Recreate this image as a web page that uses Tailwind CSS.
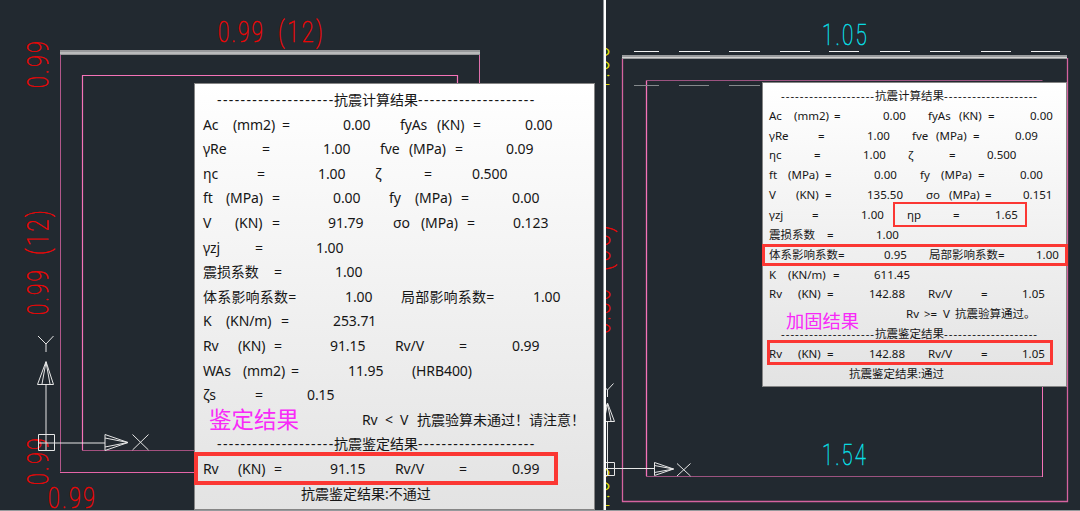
<!DOCTYPE html>
<html lang="zh-CN">
  <head>
    <meta charset="utf-8" />
    <title>抗震鉴定结果 / 加固结果</title>
    <script src="https://cdn.jsdelivr.net/npm/@tailwindcss/browser@4"></script>
  </head>
  <body class="bg-[#222930] overflow-hidden">
    <div class="flex w-[1080px] h-[511px] border-b border-[#96999c] font-['Noto_Sans','Noto_Sans_CJK_SC',sans-serif]">
      <!-- before reinforcement -->
      <div class="relative w-[603px] overflow-hidden">
        <svg class="block w-[603px] h-[510px]" viewBox="0 0 603 510" fill="none">
          <g stroke="#ff69b4">
            <path d="M60.5 54V471.5" stroke="#b2588a" />
            <path d="M60 472.5H194" stroke="#e565a8" />
            <path d="M82.5 450V75.5H457.5V84" stroke="#f573b8" stroke-width="1.2" />
            <path d="M82 450.5H194" stroke="#a3507f" />
            <path d="M479.5 54V84" stroke="#e070ac" />
          </g>
          <path d="M60 52.5H480" stroke="#98999b" stroke-width="5" />
          <path d="M60 53H480" stroke="#dcdcdc" />
          <g fill="#f00505" font-family="Roboto" font-weight="100" font-size="29" letter-spacing="3" stroke="#f00505" stroke-width="0.5">
            <text x="218" y="42" textLength="47" lengthAdjust="spacingAndGlyphs">0.99</text>
            <text x="278" y="42" textLength="47" lengthAdjust="spacingAndGlyphs">(12)</text>
            <text transform="translate(48 88) rotate(-90)" textLength="49" lengthAdjust="spacingAndGlyphs">0.99</text>
            <text transform="translate(48 315) rotate(-90)" textLength="47" lengthAdjust="spacingAndGlyphs">0.99</text>
            <text transform="translate(48 255) rotate(-90)" textLength="47" lengthAdjust="spacingAndGlyphs">(12)</text>
            <text transform="translate(48 485) rotate(-90)" textLength="49" lengthAdjust="spacingAndGlyphs">0.99</text>
            <text x="48" y="507.500" textLength="49" lengthAdjust="spacingAndGlyphs">0.99</text>
          </g>
          <!-- UCS icon -->
          <g stroke="#e6e6e6">
            <path d="M38.5 434.5H54.5V450.5H38.5ZM46 451V384M38 443H105" />
            <path d="M37.5 384.5H53.5L46 361.5ZM42 384L46 362L50 384" />
            <path d="M105 434.5V450.5L128 442.5ZM105 438L128 442.5L105 447" />
            <path d="M38 336L46 344L53.500 336M46 344V352M132.500 434.500L148.500 450M148.500 434.500L132.500 450" />
          </g>
        </svg>

        <div class="absolute left-[194px] top-[83px] w-[401px] h-[427px] border border-[#858585] bg-linear-to-b from-white to-[#e3e3e3] pl-2 pt-1 text-[14px] leading-[24.6px] tracking-[-0.1px] text-[#161616] whitespace-nowrap [&_span]:shrink-0">
          <div class="flex pl-3.5"><span class="w-[117px] tracking-[1.37px]">--------------------</span><span class="w-[84px] tracking-normal">抗震计算结果</span><span class="tracking-[1.37px]">--------------------</span></div>
          <div class="flex"><span class="w-[30px]">Ac</span><span class="w-[49px]">(mm2)</span><span class="w-[61px]">=</span><span class="w-[57px]">0.00</span><span class="w-[37px]">fyAs</span><span class="w-[36px]">(KN)</span><span class="w-[52px]">=</span><span>0.00</span></div>
          <div class="flex"><span class="w-[59px]">γRe</span><span class="w-[61px]">=</span><span class="w-[57px]">1.00</span><span class="w-[29px]">fve</span><span class="w-[46px]">(MPa)</span><span class="w-[51px]">=</span><span>0.09</span></div>
          <div class="flex"><span class="w-[54px]">ηc</span><span class="w-[61px]">=</span><span class="w-[57px]">1.00</span><span class="w-[49px]">ζ</span><span class="w-[48px]">=</span><span>0.500</span></div>
          <div class="flex"><span class="w-[23px]">ft</span><span class="w-[46px]">(MPa)</span><span class="w-[61px]">=</span><span class="w-[56px]">0.00</span><span class="w-[26px]">fy</span><span class="w-[46px]">(MPa)</span><span class="w-[51px]">=</span><span>0.00</span></div>
          <div class="flex"><span class="w-[32px]">V</span><span class="w-[37px]">(KN)</span><span class="w-[56px]">=</span><span class="w-[65px]">91.79</span><span class="w-[28px]">σo</span><span class="w-[46px]">(MPa)</span><span class="w-[46px]">=</span><span>0.123</span></div>
          <div class="flex"><span class="w-[52px]">γzj</span><span class="w-[61px]">=</span><span>1.00</span></div>
          <div class="flex"><span class="w-[71px]">震损系数</span><span class="w-[61px]">=</span><span>1.00</span></div>
          <div class="flex"><span class="w-[142px] tracking-[0.2px]">体系影响系数=</span><span class="w-[56px]">1.00</span><span class="w-[132px] tracking-[0.2px]">局部影响系数=</span><span>1.00</span></div>
          <div class="flex"><span class="w-[23px]">K</span><span class="w-[55px]">(KN/m)</span><span class="w-[52px]">=</span><span>253.71</span></div>
          <div class="flex"><span class="w-[35px]">Rv</span><span class="w-[36px]">(KN)</span><span class="w-[56px]">=</span><span class="w-[65px]">91.15</span><span class="w-[64px]">Rv/V</span><span class="w-[53px]">=</span><span>0.99</span></div>
          <div class="flex"><span class="w-[40px]">WAs</span><span class="w-[48px]">(mm2)</span><span class="w-[57px]">=</span><span class="w-[64px]">11.95</span><span>(HRB400)</span></div>
          <div class="flex"><span class="w-[52px]">ζs</span><span class="w-[52px]">=</span><span>0.15</span></div>
          <div class="flex pl-[159px]"><span class="w-[23px]">Rv</span><span class="w-[15px]">&lt;</span><span class="w-[17px]">V</span><span class="tracking-normal">抗震验算未通过！请注意！</span></div>
          <div class="flex pl-3.5"><span class="w-[117px] tracking-[1.37px]">--------------------</span><span class="w-[84px] tracking-normal">抗震鉴定结果</span><span class="tracking-[1.37px]">--------------------</span></div>
          <div class="flex"><span class="w-[35px]">Rv</span><span class="w-[36px]">(KN)</span><span class="w-[56px]">=</span><span class="w-[65px]">91.15</span><span class="w-[64px]">Rv/V</span><span class="w-[53px]">=</span><span>0.99</span></div>
          <div class="flex pl-[98px]"><span class="tracking-normal">抗震鉴定结果:不通过</span></div>
        </div>
        <div class="absolute left-[209px] top-[408px] text-[22.5px] leading-6 text-[#f82af8] whitespace-nowrap">鉴定结果</div>
        <div class="absolute left-[194px] top-[452px] w-[364px] h-[33px] border-4 border-[#fb3733]"></div>
      </div>

      <div class="w-[3px] bg-white border-l border-[#8c9094]"></div>

      <!-- after reinforcement -->
      <div class="relative w-[474px] overflow-hidden">
        <svg class="block w-[474px] h-[510px]" viewBox="606 0 474 510" fill="none">
          <path d="M622.5 58V501.5H1067.5V58" stroke="#d663a0" stroke-width="1.3" />
          <path d="M646.5 476V80.500" stroke="#f573b8" stroke-width="1.3" />
          <path d="M646 80.500H1042.500M646 476.500H1042.500" stroke="#9c5380" />
          <path d="M1042.500 386V477" stroke="#f573b8" />
          <path d="M634 51.500H659M679 51.500H710M729 51.500H760M780 51.500H810M829 51.500H859M880 51.500H910M930 51.500H960M981 51.500H1011M1031 51.500H1060" stroke="#f0f0f0" />
          <path d="M634 85.500H659M679 85.500H709M729 85.500H760" stroke="#85898c" />
          <path d="M622 57H1067" stroke="#999b9d" stroke-width="4" />
          <path d="M622 57.500H1067" stroke="#d2d2d2" />
          <g font-family="Roboto" font-weight="100" font-size="29" letter-spacing="3" stroke-width="0.5">
            <g fill="#08dfe4" stroke="#08dfe4">
              <text x="822" y="44.500" textLength="47" lengthAdjust="spacingAndGlyphs">1.05</text>
              <text x="822" y="465" textLength="46" lengthAdjust="spacingAndGlyphs">1.54</text>
            </g>
            <g fill="#e8e800" stroke="#e8e800">
              <text transform="translate(609 91) rotate(-90)" textLength="47" lengthAdjust="spacingAndGlyphs">1.00</text>
              <text transform="translate(609 512) rotate(-90)" textLength="47" lengthAdjust="spacingAndGlyphs">1.00</text>
            </g>
            <g fill="#f00505" stroke="#f00505">
              <text transform="translate(610 334) rotate(-90)" textLength="47" lengthAdjust="spacingAndGlyphs">0.86</text>
              <text transform="translate(610 271) rotate(-90)" textLength="48" lengthAdjust="spacingAndGlyphs">(05)</text>
            </g>
          </g>
          <!-- UCS icon, cut off by the viewport edge -->
          <g stroke="#e6e6e6">
            <path d="M600.500 462.500H614.500V475.500H600.500ZM607.500 476V422M600 468.500H654" />
            <path d="M600.500 421.500H614.500L607.500 403ZM604 421L607.500 404L611 421" />
            <path d="M654.500 462.500V475.500L673.500 469ZM654.500 465.500L673.500 469L654.500 472.500" />
            <path d="M601 383.500L607.500 390L613.500 383.500M607.500 390V397M677 463.500L690.500 476M690.500 463.500L677 476" />
          </g>
        </svg>

        <div class="absolute left-[156px] top-[82px] w-[305px] h-[305px] border border-[#858585] bg-linear-to-b from-white to-[#e3e3e3] pl-1.5 pt-[2.8px] text-[11.5px] leading-[19.86px] text-[#161616] whitespace-nowrap [&_span]:shrink-0">
          <div class="flex pl-3"><span class="w-[94px] tracking-[1px]">--------------------</span><span class="w-[69px]">抗震计算结果</span><span class="tracking-[1px]">--------------------</span></div>
          <div class="flex"><span class="w-[25px]">Ac</span><span class="w-[40px]">(mm2)</span><span class="w-[49px]">=</span><span class="w-[45px]">0.00</span><span class="w-[31px]">fyAs</span><span class="w-[29px]">(KN)</span><span class="w-[42px]">=</span><span>0.00</span></div>
          <div class="flex"><span class="w-[49px]">γRe</span><span class="w-[49px]">=</span><span class="w-[45px]">1.00</span><span class="w-[24px]">fve</span><span class="w-[37px]">(MPa)</span><span class="w-[42px]">=</span><span>0.09</span></div>
          <div class="flex"><span class="w-[45px]">ηc</span><span class="w-[49px]">=</span><span class="w-[45px]">1.00</span><span class="w-[41px]">ζ</span><span class="w-[38px]">=</span><span>0.500</span></div>
          <div class="flex"><span class="w-[19px]">ft</span><span class="w-[37px]">(MPa)</span><span class="w-[49px]">=</span><span class="w-[46px]">0.00</span><span class="w-[21px]">fy</span><span class="w-[37px]">(MPa)</span><span class="w-[42px]">=</span><span>0.00</span></div>
          <div class="flex"><span class="w-[27px]">V</span><span class="w-[29px]">(KN)</span><span class="w-[42px]">=</span><span class="w-[59px]">135.50</span><span class="w-[23px]">σo</span><span class="w-[36px]">(MPa)</span><span class="w-[38px]">=</span><span>0.151</span></div>
          <div class="flex"><span class="w-[43px]">γzj</span><span class="w-[49px]">=</span><span class="w-[46px]">1.00</span><span class="w-[46px]">ηp</span><span class="w-[42px]">=</span><span>1.65</span></div>
          <div class="flex"><span class="w-[58px]">震损系数</span><span class="w-[49px]">=</span><span>1.00</span></div>
          <div class="flex"><span class="w-[115px]">体系影响系数=</span><span class="w-[45px]">0.95</span><span class="w-[107px]">局部影响系数=</span><span>1.00</span></div>
          <div class="flex"><span class="w-[19px]">K</span><span class="w-[45px]">(KN/m)</span><span class="w-[41px]">=</span><span>611.45</span></div>
          <div class="flex"><span class="w-[29px]">Rv</span><span class="w-[29px]">(KN)</span><span class="w-[42px]">=</span><span class="w-[59px]">142.88</span><span class="w-[53px]">Rv/V</span><span class="w-[41px]">=</span><span>1.05</span></div>
          <div class="flex pl-[137px]"><span class="w-[18px]">Rv</span><span class="w-[19px]">&gt;=</span><span class="w-[12px]">V</span><span>抗震验算通过。</span></div>
          <div class="flex pl-3"><span class="w-[94px] tracking-[1px]">--------------------</span><span class="w-[69px]">抗震鉴定结果</span><span class="tracking-[1px]">--------------------</span></div>
          <div class="flex"><span class="w-[29px]">Rv</span><span class="w-[29px]">(KN)</span><span class="w-[42px]">=</span><span class="w-[59px]">142.88</span><span class="w-[53px]">Rv/V</span><span class="w-[41px]">=</span><span>1.05</span></div>
          <div class="flex pl-[80px]"><span>抗震鉴定结果:通过</span></div>
        </div>
        <div class="absolute left-[180px] top-[311px] text-[18.3px] leading-5 text-[#f82af8] whitespace-nowrap">加固结果</div>
        <div class="absolute left-[287px] top-[202px] w-[134px] h-[25px] border-2 border-[#fb3733]"></div>
        <div class="absolute left-[156px] top-[244px] w-[306px] h-[22px] border-[3px] border-[#fb3733]"></div>
        <div class="absolute left-[161px] top-[340px] w-[286px] h-[25px] border-[3px] border-[#fb3733]"></div>
      </div>
    </div>
  </body>
</html>
